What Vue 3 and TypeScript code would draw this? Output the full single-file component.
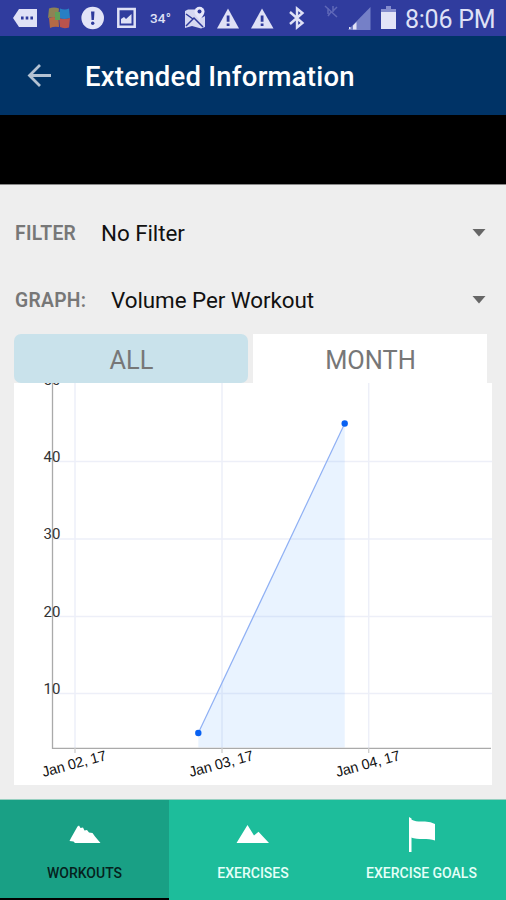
<script setup lang="ts">
import { ref } from 'vue'

type Range = 'ALL' | 'MONTH'
const ranges: Range[] = ['ALL', 'MONTH']
const range = ref<Range>('ALL')

const filters = [
  { label: 'FILTER', value: 'No Filter', kind: 'filter' },
  { label: 'GRAPH:', value: 'Volume Per Workout', kind: 'graph' },
]

const yTicks = [
  { label: '50', y: 1.8 },
  { label: '40', y: 78.5 },
  { label: '30', y: 156 },
  { label: '20', y: 233.5 },
  { label: '10', y: 310.5 },
]
const xTicks = [
  { label: 'Jan 02, 17', x: 61 },
  { label: 'Jan 03, 17', x: 208 },
  { label: 'Jan 04, 17', x: 354.7 },
]
const points = [
  { x: 184.3, y: 350 },
  { x: 330.7, y: 40.5 },
]

const tabs = [
  { label: 'WORKOUTS', icon: 'M1.500 19 L3 16 L9.500 4.500 L11 3.500 L12.500 6 L15 5.500 L16.500 8.500 L19 8 L21 10.500 L24.500 11 L27 14.500 L32.500 21 H7 L5.500 19.500 Z' },
  { label: 'EXERCISES', icon: 'M.5 21 L11.5 3 L18 13.5 L22.5 9.7 L33 21 Z' },
  { label: 'EXERCISE GOALS', icon: '' },
]
const activeTab = ref('WORKOUTS')
</script>

<template>
  <div class="screen">
    <div class="status">
      <svg width="35" height="36" fill="#dfe1f6"><path d="M0 18 6 9H24V27H6Z" /><g fill="#2e3a9c"><rect x="8" y="16.5" width="2.6" height="3" /><rect x="12.7" y="16.5" width="2.6" height="3" /><rect x="17.4" y="16.5" width="2.6" height="3" /></g></svg>
      <svg width="33" height="36"><path d="M1 8.5Q6 6.500 11 8.500L10 18Q5 16 0 18Z" fill="#8d8355" /><path d="M12 8.500Q17 10.500 21 8.500L22 18Q16 20 11 18Z" fill="#287fc4" /><path d="M1 18Q5 16 10.500 18L11 27Q6 26 2 28Z" fill="#b56a45" /><path d="M11 18Q16 20 22 18L21 27.500Q16 29 12 27Z" fill="#b9534d" /><path d="M7 12H12V20H7Z" fill="#5f9f59" /></svg>
      <svg width="36" height="36"><circle cx="11.700" cy="18" r="11.300" fill="#e3e4f7" /><path d="M10 11.500H13.500L12.900 20H10.600Z" fill="#2e3a9c" /><circle cx="11.700" cy="23.300" r="1.700" fill="#2e3a9c" /></svg>
      <svg width="33" height="36"><path d="M1.300 9H17.700V26.700H1.300Z" fill="none" stroke="#dfe1f6" stroke-width="2.500" /><path d="M4 23.500V19L7 17 9 19 14.500 14V23.500Z" fill="#dfe1f6" /></svg>
      <span class="temp">34°</span>
      <svg width="32" height="36"><path d="M0 11 3 9.500H10Q10 15 14.500 19L20 16V27L16 28.500 7 26 0 28Z" fill="#d5d8f1" /><path d="M1 26 9 18 18 27M1 14 8 19" fill="none" stroke="#2e3a9c" stroke-width="1.500" /><path d="M14.500 20Q9.500 15 9.500 11.500A5 4.700 0 0 1 19.500 11.500Q19.500 15 14.500 20Z" fill="#e7e8fa" /><circle cx="14.500" cy="11.500" r="2" fill="#2e3a9c" /></svg>
      <svg width="34" height="36"><path d="M11 8.500 22 28.500H0Z" fill="#dfe1f6" /><path d="M9.700 15.500H12.500V21.700H9.700ZM9.700 23.500H12.500V26H9.700Z" fill="#2e3a9c" /></svg>
      <svg width="38" height="36"><path d="M11 8.500 22.500 28.500H0Z" fill="#dfe1f6" /><path d="M9.700 15.500H12.500V21.700H9.700ZM9.700 23.500H12.500V26H9.700Z" fill="#2e3a9c" /></svg>
      <svg width="35" height="36" fill="none" stroke="#dfe1f6" stroke-width="2.400"><path d="M1 12 13.500 23 8 27.500V8.500L13.500 13 1 24" /></svg>
      <svg width="24" height="36" fill="none" stroke="#5f68b8" stroke-width="1.500"><path d="M1 6 13 17M4 8V14M7 12 4 16M9 6V12M13 7 9 11" /></svg>
      <svg width="33" height="36"><path d="M0 30 22.500 7V30Z" fill="#7580c7" /><path d="M1 29V27H2.500V29ZM5 29.500V25.500L8.500 22V29.500Z" fill="#e3e4f7" /></svg>
      <svg width="25" height="36"><path d="M5 6H10V9H15V13H0V9H5Z" fill="#858dcd" /><path d="M0 12H15V29H0Z" fill="#e3e4f7" /></svg>
      <span class="clock">8:06 PM</span>
    </div>

    <header class="appbar">
      <svg class="back" width="24" height="24" fill="none" stroke="#b3c2d3" stroke-width="2.800"><path d="M24 11.500H3M13 1 2.500 11.500 13 22" /></svg>
      <h1>Extended Information</h1>
    </header>
    <div class="banner"></div>

    <main>
      <div v-for="f in filters" :key="f.kind" class="field" :class="f.kind">
        <span class="field-label">{{ f.label }}</span>
        <span class="field-value">{{ f.value }}</span>
        <svg width="14" height="8"><path d="M.5 0H13.500L7 7.500Z" fill="#666" /></svg>
      </div>

      <div class="ranges">
        <button v-for="r in ranges" :key="r" :class="{ selected: range === r }" @click="range = r">{{ r }}</button>
      </div>

      <svg class="chart" width="478" height="402">
        <g stroke="#edeff8" stroke-width="1.500">
          <line v-for="t in yTicks.slice(1)" :key="t.label" x1="38.500" x2="478" :y1="t.y" :y2="t.y" />
          <line v-for="t in xTicks" :key="t.label" y1="0" y2="365" :x1="t.x" :x2="t.x" />
        </g>
        <polygon :points="`${points[0].x},${points[0].y} ${points[1].x},${points[1].y} ${points[1].x},364.500 ${points[0].x},364.500`" fill="#4ca2ff" fill-opacity=".125" />
        <g stroke="#aaa" stroke-width="1.300">
          <path d="M38.500 0V365.300H477" fill="none" />
          <line v-for="t in xTicks" :key="t.label" y1="365" y2="370" :x1="t.x" :x2="t.x" stroke="#ccc" />
        </g>
        <line :x1="points[0].x" :y1="points[0].y" :x2="points[1].x" :y2="points[1].y" stroke="#8fb0f4" stroke-width="1.200" />
        <circle v-for="p in points" :key="p.x" :cx="p.x" :cy="p.y" r="3.200" fill="#0861f2" />
        <text v-for="t in yTicks" :key="t.label" class="y-label" x="29.500" :y="t.y">{{ t.label }}</text>
        <text v-for="t in xTicks" :key="t.label" class="x-label" :transform="`translate(${t.x - 31.500} 394) rotate(-15)`" textLength="66">{{ t.label }}</text>
      </svg>
    </main>

    <nav>
      <button v-for="t in tabs" :key="t.label" :class="{ active: activeTab === t.label }" @click="activeTab = t.label">
        <svg v-if="t.icon" width="34" height="22"><path :d="t.icon" fill="#fff" /></svg>
        <svg v-else class="flag" width="28" height="36" fill="#fff"><path d="M1 0 3.500 1.500V35H1Z" /><path d="M3 2.500C8 5 12 4.500 17 4.500Q23 4.500 27 7V23.500C20 20.500 10 23.500 3 20.500Z" /></svg>
        <span>{{ t.label }}</span>
      </button>
    </nav>
  </div>
</template>

<style>
body { margin: 0; }
</style>

<style scoped>
.screen {
  width: 506px;
  height: 900px;
  overflow: hidden;
  display: flex;
  flex-direction: column;
  background: #eee;
  font-family: Roboto, "Liberation Sans", sans-serif;
}
svg { display: block; flex: none; }
button { border: 0; padding: 0; font-family: inherit; }
.status {
  height: 36px;
  flex: none;
  display: flex;
  align-items: center;
  padding-left: 13px;
  background: #303c9e;
  color: #dfe1f6;
  white-space: nowrap;
}
.temp { width: 35px; font-size: 13.5px; font-weight: 500; letter-spacing: .2px; }
.clock { margin: 3px 0 0 -1px; font-size: 25px; letter-spacing: -.25px; }
.appbar {
  height: 79px;
  flex: none;
  box-sizing: border-box;
  display: flex;
  align-items: center;
  padding: 0 0 0 27px;
  background: #036;
}
h1 { margin: 2px 0 0 34px; color: #fff; font-size: 27.5px; font-weight: 500; letter-spacing: .24px; white-space: nowrap; }
.banner { height: 69px; flex: none; background: #000; border-bottom: 1px solid #888; }
main { height: 614px; flex: none; padding: 15px 14px 0; box-sizing: border-box; }
.field {
  height: 67px;
  box-sizing: border-box;
  display: flex;
  align-items: center;
  padding: 0 6px 2px 0;
  white-space: nowrap;
}
.field-label { width: 87px; box-sizing: border-box; padding: 1px 0 0 1px; color: #777; font-size: 19.3px; font-weight: 600; letter-spacing: .3px; }
.graph .field-label { width: 97px; }
.field-value { flex: 1; color: #111; font-size: 22.4px; letter-spacing: -.05px; }
.ranges { height: 49px; display: flex; gap: 5px; }
.ranges button { width: 234px; height: 49px; padding: 2px 0 0 1px; background: #fff; color: #777; font-size: 25.4px; }
.ranges .selected { background: #c9e2eb; border-radius: 7px; }
.chart { background: #fff; overflow: hidden; }
.y-label { font-size: 15px; fill: #333; }
.x-label { font-family: "Liberation Sans", sans-serif; font-size: 14.5px; fill: #111; }
nav {
  height: 101px;
  flex: none;
  box-sizing: border-box;
  display: grid;
  grid-template-columns: 169px 168px 169px;
  border-top: 1px solid #96cfc0;
  background: #1dbd9b;
}
nav button {
  display: flex;
  flex-direction: column;
  align-items: center;
  justify-content: flex-end;
  box-sizing: border-box;
  padding-bottom: 19px;
  background: #1dbd9b;
  color: #e5fff8;
  font-size: 14px;
  font-weight: 500;
}
nav .active { background: #19a085; color: #06221d; border-bottom: 2px solid #000; padding-bottom: 17px; }
nav svg { margin-bottom: 21px; }
nav .flag { margin-bottom: 12px; }
</style>
